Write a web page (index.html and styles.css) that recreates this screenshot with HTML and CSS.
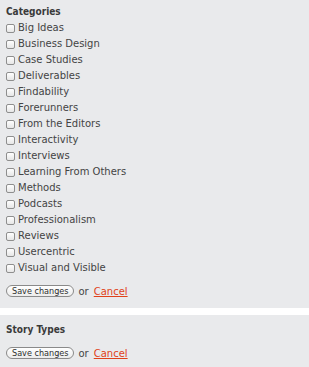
FILE: index.html
```html
<!DOCTYPE html>
<html lang="en">
  <head>
    <meta charset="UTF-8" />
    <title>Edit Taxonomies</title>
    <link rel="stylesheet" href="styles.css">
  </head>
  <body>
    <form class="panel panel-first">
      <h3 class="title">Categories</h3>
      <ul class="options">
        <li class="option"><input id="c1" type="checkbox" /><label for="c1">Big Ideas</label></li>
        <li class="option"><input id="c2" type="checkbox" /><label for="c2">Business Design</label></li>
        <li class="option"><input id="c3" type="checkbox" /><label for="c3">Case Studies</label></li>
        <li class="option"><input id="c4" type="checkbox" /><label for="c4">Deliverables</label></li>
        <li class="option"><input id="c5" type="checkbox" /><label for="c5">Findability</label></li>
        <li class="option"><input id="c6" type="checkbox" /><label for="c6">Forerunners</label></li>
        <li class="option"><input id="c7" type="checkbox" /><label for="c7">From the Editors</label></li>
        <li class="option"><input id="c8" type="checkbox" /><label for="c8">Interactivity</label></li>
        <li class="option"><input id="c9" type="checkbox" /><label for="c9">Interviews</label></li>
        <li class="option"><input id="c10" type="checkbox" /><label for="c10">Learning From Others</label></li>
        <li class="option"><input id="c11" type="checkbox" /><label for="c11">Methods</label></li>
        <li class="option"><input id="c12" type="checkbox" /><label for="c12">Podcasts</label></li>
        <li class="option"><input id="c13" type="checkbox" /><label for="c13">Professionalism</label></li>
        <li class="option"><input id="c14" type="checkbox" /><label for="c14">Reviews</label></li>
        <li class="option"><input id="c15" type="checkbox" /><label for="c15">Usercentric</label></li>
        <li class="option"><input id="c16" type="checkbox" /><label for="c16">Visual and Visible</label></li>
      </ul>
      <div class="actions">
        <button class="save-btn" type="button">Save changes</button>
        <span class="or">or</span>
        <a class="cancel" href="#">Cancel</a>
      </div>
    </form>

    <form class="panel">
      <h3 class="title">Story Types</h3>
      <div class="actions">
        <button class="save-btn" type="button">Save changes</button>
        <span class="or">or</span>
        <a class="cancel" href="#">Cancel</a>
      </div>
    </form>
  </body>
</html>
```

FILE: styles.css
```css
body {
  margin: 0;
  background: #ffffff;
  font-family: "DejaVu Sans", Verdana, sans-serif;
  font-size: 10px;
  color: #444444;
}

/* Grey boxes */
.panel {
  background: #e9eaec;
  padding: 7px 6px 11px;
  margin: 0 0 7px;
}

.panel-first {
  padding-top: 4px;
}

.title {
  margin: 0;
  font-family: "DejaVu Sans Condensed", "DejaVu Sans", sans-serif;
  font-size: 10px;
  font-weight: bold;
  line-height: 16px;
  color: #3a3a3a;
}

.options {
  list-style: none;
  margin: 0;
  padding: 0;
}

.option {
  display: flex;
  align-items: center;
  height: 16px;
}

.option input {
  appearance: none;
  -webkit-appearance: none;
  box-sizing: border-box;
  width: 9px;
  height: 9px;
  margin: 0 3px 0 0;
  border: 1px solid #8e8e8e;
  border-radius: 2px;
  background: linear-gradient(#ffffff, #e6e6e6);
}

.option label {
  line-height: 16px;
}

.actions {
  display: flex;
  align-items: center;
  margin-top: 9px;
  height: 12px;
}

.save-btn {
  box-sizing: border-box;
  height: 12px;
  padding: 0 5px;
  border: 1px solid #8a8a8a;
  border-radius: 7px;
  background: linear-gradient(#ffffff, #ececec);
  font-family: "DejaVu Sans Condensed", "DejaVu Sans", sans-serif;
  font-size: 9px;
  line-height: 10px;
  color: #2e2e2e;
}

.or {
  margin: 0 5px 0 4px;
}

.cancel {
  color: #e0421a;
}
```
